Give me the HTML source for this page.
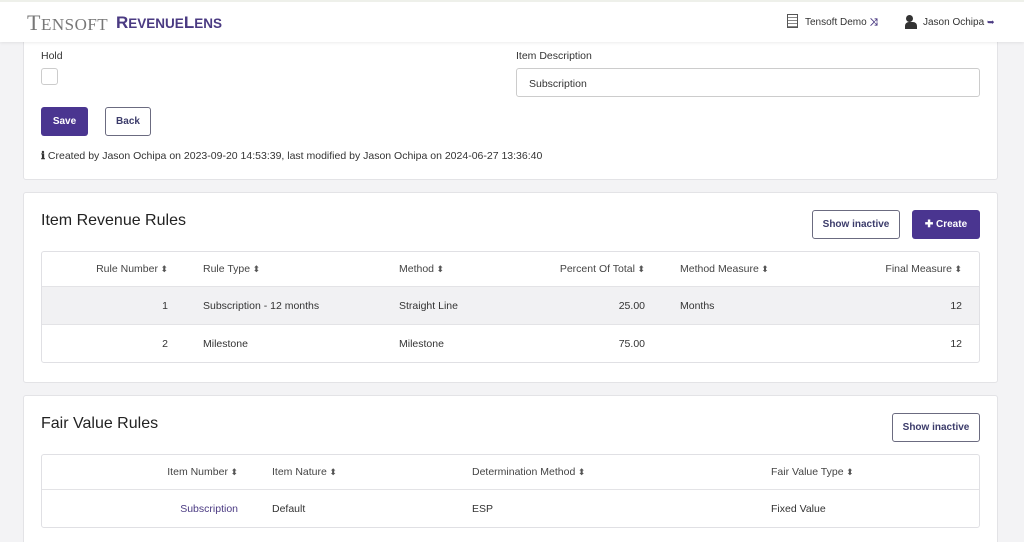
<!DOCTYPE html>
<html><head><style>
*{box-sizing:border-box;margin:0;padding:0}
html,body{width:1024px;height:542px;overflow:hidden}
body{background:#f3f3f5;font-family:"Liberation Sans",sans-serif;font-size:10.5px;color:#333;position:relative}
.nav{position:absolute;left:0;top:0;width:1024px;height:42px;background:#fff;border-top:2px solid #eef0ea;box-shadow:0 1px 3px rgba(0,0,0,.08);z-index:2}
.card{position:absolute;left:23px;width:975px;background:#fff;border:1px solid #e3e3e6;border-radius:3px}
.abs{position:absolute}
.btnp{position:absolute;background:#4a3590;color:#fff;border-radius:3px;font-weight:bold;font-size:10px;text-align:center}
.btno{position:absolute;background:#fff;color:#3b3b6a;border:1px solid #6b6b80;border-radius:3px;font-weight:bold;font-size:10px;text-align:center}
.tbl{position:absolute;left:17px;width:939px;border:1px solid #e0e0e4;border-radius:3px;overflow:hidden}
.row{position:relative;height:38px;border-top:1px solid #e3e3e6}
.row span{position:absolute;top:13px;white-space:nowrap}
.hd{height:34px;border-top:none}
.hd span{top:11px;color:#444}
.s::after{content:" \2B0D";font-size:9px;color:#555}
</style></head><body>
<div class="nav">
 <div class="abs" style="left:27px;top:8px;font-family:'Liberation Serif',serif;font-size:22px;color:#777;letter-spacing:0.5px">T<span style="font-size:17px">ENSOFT</span></div>
 <div class="abs" style="left:116px;top:11px;font-size:17px;font-weight:bold;color:#4a3a82">R<span style="font-size:13.5px">EVENUE</span>L<span style="font-size:13.5px">ENS</span></div>
 <div class="abs" style="left:787px;top:12px;width:11px;height:14px;border:1.5px solid #555;background:repeating-linear-gradient(#fff 0 2px,#888 2px 3px)"></div>
 <div class="abs" style="left:805px;top:15px;font-size:10px">Tensoft Demo <span style="color:#4a3a82;font-weight:bold">⤨</span></div>
 <div class="abs" style="left:906px;top:13px;width:7px;height:7px;border-radius:50%;background:#333"></div>
 <div class="abs" style="left:905px;top:20px;width:12px;height:7px;border-radius:4px 4px 0 0;background:#333"></div>
 <div class="abs" style="left:923px;top:15px;font-size:10px">Jason Ochipa <span style="color:#4a3a82;font-size:9px">➥</span></div>
</div>

<div class="card" style="top:30px;height:150px">
 <div class="abs" style="left:17px;top:19px">Hold</div>
 <div class="abs" style="left:17px;top:37px;width:17px;height:17px;border:1px solid #ccc;border-radius:3px"></div>
 <div class="abs" style="left:492px;top:19px">Item Description</div>
 <div class="abs" style="left:492px;top:37px;width:464px;height:29px;border:1px solid #ccc;border-radius:3px;padding:9px 12px">Subscription</div>
 <div class="btnp" style="left:17px;top:76px;width:47px;height:29px;line-height:29px">Save</div>
 <div class="btno" style="left:81px;top:76px;width:46px;height:29px;line-height:27px">Back</div>
 <div class="abs" style="left:17px;top:119px"><b>ℹ</b> Created by Jason Ochipa on 2023-09-20 14:53:39, last modified by Jason Ochipa on 2024-06-27 13:36:40</div>
</div>

<div class="card" style="top:192px;height:191px">
 <div class="abs" style="left:17px;top:19px;font-size:16px;color:#222">Item Revenue Rules</div>
 <div class="btno" style="left:788px;top:17px;width:88px;height:29px;line-height:27px">Show inactive</div>
 <div class="btnp" style="left:888px;top:17px;width:68px;height:29px;line-height:29px">✚ Create</div>
 <div class="tbl" style="top:58px">
  <div class="row hd"><span class="s" style="right:811px">Rule Number</span><span class="s" style="left:161px">Rule Type</span><span class="s" style="left:357px">Method</span><span class="s" style="right:334px">Percent Of Total</span><span class="s" style="left:638px">Method Measure</span><span class="s" style="right:17px">Final Measure</span></div>
  <div class="row" style="background:#f1f1f3"><span style="right:811px">1</span><span style="left:161px">Subscription - 12 months</span><span style="left:357px">Straight Line</span><span style="right:334px">25.00</span><span style="left:638px">Months</span><span style="right:17px">12</span></div>
  <div class="row"><span style="right:811px">2</span><span style="left:161px">Milestone</span><span style="left:357px">Milestone</span><span style="right:334px">75.00</span><span style="right:17px">12</span></div>
 </div>
</div>

<div class="card" style="top:395px;height:160px">
 <div class="abs" style="left:17px;top:19px;font-size:16px;color:#222">Fair Value Rules</div>
 <div class="btno" style="left:868px;top:17px;width:88px;height:29px;line-height:27px">Show inactive</div>
 <div class="tbl" style="top:58px">
  <div class="row hd"><span class="s" style="right:741px">Item Number</span><span class="s" style="left:230px">Item Nature</span><span class="s" style="left:430px">Determination Method</span><span class="s" style="left:729px">Fair Value Type</span></div>
  <div class="row"><span style="right:741px;color:#4a3a82">Subscription</span><span style="left:230px">Default</span><span style="left:430px">ESP</span><span style="left:729px">Fixed Value</span></div>
 </div>
</div>
</body></html>
